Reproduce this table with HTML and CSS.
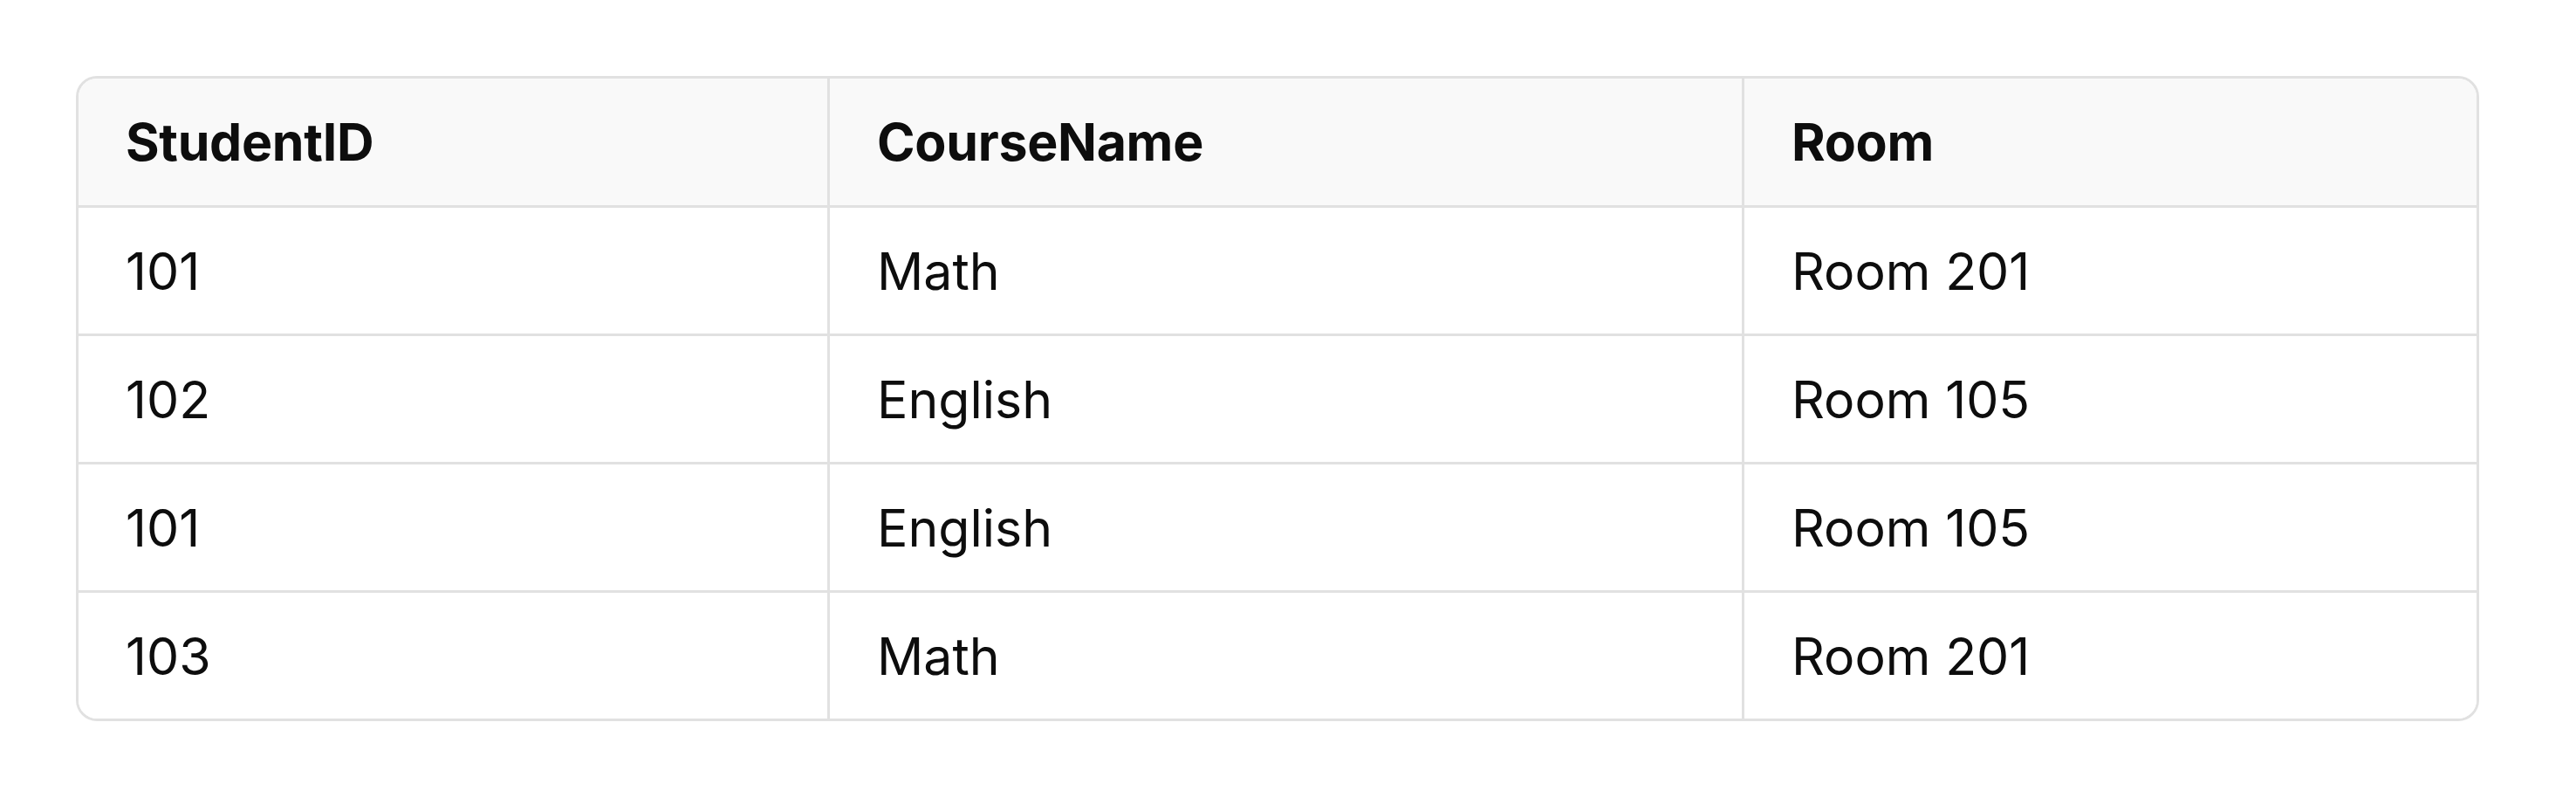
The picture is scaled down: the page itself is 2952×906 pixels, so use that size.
FILE: index.html
```html
<!DOCTYPE html>
<html lang="en">
<head>
<meta charset="utf-8">
<title>Table</title>
<link rel="stylesheet" href="styles.css">
</head>
<body>
<div class="table-wrap">
  <div class="grid">
    <div class="cell head">StudentID</div>
    <div class="cell head">CourseName</div>
    <div class="cell head last-col">Room</div>

    <div class="cell">101</div>
    <div class="cell">Math</div>
    <div class="cell last-col">Room 201</div>

    <div class="cell">102</div>
    <div class="cell">English</div>
    <div class="cell last-col">Room 105</div>

    <div class="cell">101</div>
    <div class="cell">English</div>
    <div class="cell last-col">Room 105</div>

    <div class="cell last-row">103</div>
    <div class="cell last-row">Math</div>
    <div class="cell last-row last-col">Room 201</div>
  </div>
</div>
</body>
</html>
```

FILE: styles.css
```css
html, body {
  margin: 0;
  padding: 0;
  background: #ffffff;
}

body {
  padding: 87px 0 0 87px;
  font-family: "Inter", "Liberation Sans", sans-serif;
  color: #0d0d0d;
}

.table-wrap {
  width: 2748px;
  border: 3px solid #e1e1e1;
  border-radius: 24px;
  overflow: hidden;
}

.grid {
  display: grid;
  grid-template-columns: 861px 1048px 839px;
  grid-template-rows: 148px 147px 147px 147px 144px;
}

.cell {
  display: flex;
  align-items: center;
  padding: 0 54px;
  font-size: 59px;
  font-weight: 400;
  letter-spacing: 0;
  border-right: 3px solid #e1e1e1;
  border-bottom: 3px solid #e1e1e1;
  background: #ffffff;
}

.cell.head {
  background: #f9f9f9;
  font-weight: 700;
  letter-spacing: -0.3px;
}

.cell.last-col {
  border-right: none;
}

.cell.last-row {
  border-bottom: none;
}
```
